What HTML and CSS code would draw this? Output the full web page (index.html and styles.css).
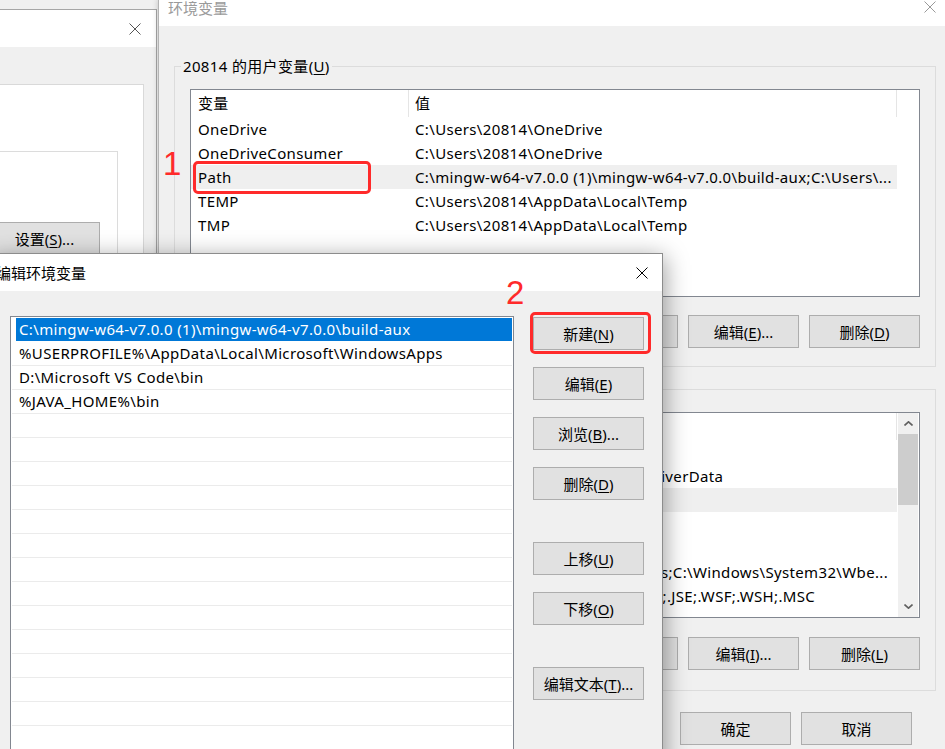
FILE: index.html
```html
<!DOCTYPE html>
<html lang="zh-CN">
<head>
  <meta charset="UTF-8" />
  <title>环境变量</title>
  <link rel="stylesheet" href="styles.css">
</head>
<body>

  <!-- 系统属性 (behind) -->
  <section class="win win-sys">
    <div class="titlebar">
      <span class="title"></span>
      <svg class="close" viewBox="0 0 12 12"><path d="M0.5 0.5L11.5 11.5M11.5 0.5L0.5 11.5" /></svg>
    </div>
    <div class="sys-body">
      <div class="sys-page">
        <div class="sys-group">
          <button class="btn">设置(<u>S</u>)...</button>
        </div>
      </div>
    </div>
  </section>

  <!-- 环境变量 -->
  <section class="win win-env">
    <div class="titlebar">
      <span class="title">环境变量</span>
      <svg class="close" viewBox="0 0 12 12"><path d="M0.5 0.5L11.5 11.5M11.5 0.5L0.5 11.5" /></svg>
    </div>
    <div class="env-body">
      <fieldset class="group">
        <legend>20814 的用户变量(<u>U</u>)</legend>
        <div class="listview lv-user">
          <div class="lv-main">
            <div class="lv-head"><span>变量</span><span>值</span></div>
            <div class="lv-row"><span>OneDrive</span><span>C:\Users\20814\OneDrive</span></div>
            <div class="lv-row"><span>OneDriveConsumer</span><span>C:\Users\20814\OneDrive</span></div>
            <div class="lv-row sel"><span>Path</span><span>C:\mingw-w64-v7.0.0 (1)\mingw-w64-v7.0.0\build-aux;C:\Users\...</span></div>
            <div class="lv-row"><span>TEMP</span><span>C:\Users\20814\AppData\Local\Temp</span></div>
            <div class="lv-row"><span>TMP</span><span>C:\Users\20814\AppData\Local\Temp</span></div>
          </div>
        </div>
        <div class="btn-row">
          <button class="btn">新建(<u>N</u>)...</button>
          <button class="btn">编辑(<u>E</u>)...</button>
          <button class="btn">删除(<u>D</u>)</button>
        </div>
      </fieldset>

      <fieldset class="group group-sys">
        <legend>系统变量(<u>S</u>)</legend>
        <div class="listview lv-sys">
          <div class="lv-main">
            <div class="lv-head"><span>变量</span><span>值</span></div>
            <div class="lv-row"><span>ComSpec</span><span>C:\Windows\system32\cmd.exe</span></div>
            <div class="lv-row"><span>DriverData</span><span>C:\Windows\System32\Drivers\DriverData</span></div>
            <div class="lv-row sel"><span>JAVA_HOME</span><span>D:\jdk1.8</span></div>
            <div class="lv-row"><span>NUMBER_OF_PROCESSORS</span><span>8</span></div>
            <div class="lv-row"><span>OS</span><span>Windows_NT</span></div>
            <div class="lv-row"><span>Path</span><span>C:\Windows\system32;C:\Windows;C:\Windows\System32\Wbe...</span></div>
            <div class="lv-row"><span>PATHEXT</span><span>.COM;.EXE;.BAT;.CMD;.VBS;.VBE;.JS;.JSE;.WSF;.WSH;.MSC</span></div>
          </div>
          <div class="scrollbar">
            <div class="sb-arrow"><svg viewBox="0 0 9 5"><path d="M0.5 4.5L4.5 0.8L8.5 4.5" /></svg></div>
            <div class="sb-thumb"></div>
            <div class="sb-track"></div>
            <div class="sb-arrow"><svg viewBox="0 0 9 5"><path d="M0.5 0.5L4.5 4.2L8.5 0.5" /></svg></div>
          </div>
        </div>
        <div class="btn-row">
          <button class="btn">新建(<u>W</u>)...</button>
          <button class="btn">编辑(<u>I</u>)...</button>
          <button class="btn">删除(<u>L</u>)</button>
        </div>
      </fieldset>

      <div class="btn-row dialog-btns">
        <button class="btn">确定</button>
        <button class="btn">取消</button>
      </div>
    </div>
  </section>

  <div class="mark mark-1">1</div>
  <div class="redbox box-path"></div>

  <!-- 编辑环境变量 (active) -->
  <section class="win win-edit">
    <div class="titlebar">
      <span class="title">编辑环境变量</span>
      <svg class="close" viewBox="0 0 12 12"><path d="M0.5 0.5L11.5 11.5M11.5 0.5L0.5 11.5" /></svg>
    </div>
    <div class="edit-body">
      <div class="path-list">
        <div class="path-row sel">C:\mingw-w64-v7.0.0 (1)\mingw-w64-v7.0.0\build-aux</div>
        <div class="path-row">%USERPROFILE%\AppData\Local\Microsoft\WindowsApps</div>
        <div class="path-row">D:\Microsoft VS Code\bin</div>
        <div class="path-row">%JAVA_HOME%\bin</div>
        <div class="path-row"></div>
        <div class="path-row"></div>
        <div class="path-row"></div>
        <div class="path-row"></div>
        <div class="path-row"></div>
        <div class="path-row"></div>
        <div class="path-row"></div>
        <div class="path-row"></div>
        <div class="path-row"></div>
        <div class="path-row"></div>
        <div class="path-row"></div>
        <div class="path-row"></div>
        <div class="path-row"></div>
        <div class="path-row"></div>
      </div>
      <div class="side-btns">
        <button class="btn">新建(<u>N</u>)</button>
        <button class="btn">编辑(<u>E</u>)</button>
        <button class="btn">浏览(<u>B</u>)...</button>
        <button class="btn">删除(<u>D</u>)</button>
        <button class="btn gap-before">上移(<u>U</u>)</button>
        <button class="btn">下移(<u>O</u>)</button>
        <button class="btn gap-before">编辑文本(<u>T</u>)...</button>
      </div>
    </div>
  </section>

  <div class="mark mark-2">2</div>
  <div class="redbox box-new"></div>

</body>
</html>
```

FILE: styles.css
```css
* {
  box-sizing: border-box;
}

body {
  margin: 0;
  width: 945px;
  height: 749px;
  overflow: hidden;
  position: relative;
  background: #f0f0f0;
  font-family: "Noto Sans", "Noto Sans CJK SC", sans-serif;
  font-size: 15px;
  letter-spacing: 0.35px;
  color: #000;
}

u {
  text-decoration-thickness: 1px;
  text-underline-offset: 2px;
}

/* windows */
.win {
  position: absolute;
  background: #f0f0f0;
  display: flex;
  flex-direction: column;
}

.titlebar {
  background: #fff;
  display: flex;
  justify-content: space-between;
  align-items: center;
  flex: none;
}

.close {
  width: 12px;
  height: 12px;
  fill: none;
  stroke: #000;
  stroke-width: 1;
}

.btn {
  width: 111px;
  height: 33px;
  background: #e1e1e1;
  border: 1px solid #adadad;
  font: inherit;
  letter-spacing: 0;
  color: #000;
  padding: 0;
  display: flex;
  align-items: center;
  justify-content: center;
  flex: none;
}

/* system properties window */
.win-sys {
  left: -300px;
  top: 9px;
  width: 457px;
  height: 760px;
  border: 1px solid #a6a6a6;
}

.win-sys .titlebar {
  height: 37px;
  padding-right: 15px;
}

.win-sys .close {
  stroke: #555;
}

.sys-body {
  flex: 1;
  display: flex;
  padding: 37px 12px 0 0;
}

.sys-page {
  flex: 1;
  background: #fff;
  border: 1px solid #d9d9d9;
  padding: 66px 25px 0 0;
}

.sys-group {
  height: 300px;
  border: 1px solid #dcdcdc;
  padding: 70px 17px 0 0;
  display: flex;
  justify-content: flex-end;
  align-items: flex-start;
}

/* environment variables window */
.win-env {
  left: 158px;
  top: -1px;
  width: 794px;
  height: 775px;
  border: 1px solid #b4b4b4;
  box-shadow: 0 0 6px rgba(0, 0, 0, 0.2);
}

.win-env .titlebar {
  height: 26px;
  align-items: flex-start;
  padding: 0 15px 0 9px;
}

.win-env .title {
  line-height: 16px;
  letter-spacing: 0;
  color: #9a9a9a;
}

.win-env .close {
  margin-top: 1px;
  stroke: #999;
}

.env-body {
  padding: 0 15px;
  display: flex;
  flex-direction: column;
}

.group {
  margin: 30px 0 0;
  padding: 13px 15px 18px;
  border: 1px solid #dcdcdc;
  min-width: 0;
}

.group-sys {
  margin-top: 12px;
  padding-bottom: 20px;
}

.group legend {
  padding: 0 2px;
  margin-left: -9px;
  line-height: 20px;
}

.listview {
  background: #fff;
  border: 1px solid #828790;
  display: flex;
  overflow: hidden;
}

.lv-user {
  height: 208px;
}

.lv-sys {
  height: 206px;
}

.lv-main {
  width: 706px;
  flex: none;
}

.lv-head,
.lv-row {
  display: grid;
  grid-template-columns: 218px 488px;
  white-space: nowrap;
}

.lv-head {
  height: 27px;
  line-height: 27px;
}

.lv-head span {
  border-right: 1px solid #e5e5e5;
  padding-left: 7px;
}

.lv-head span + span {
  padding-left: 6px;
}

.lv-row {
  height: 24px;
  line-height: 24px;
}

.lv-row span {
  padding-left: 7px;
  overflow: hidden;
}

.lv-row span + span {
  padding-left: 6px;
}

.lv-row.sel {
  background: #efefef;
}

.scrollbar {
  width: 20px;
  margin-left: 1px;
  background: #f0f0f0;
  display: flex;
  flex-direction: column;
}

.sb-arrow {
  height: 21px;
  display: flex;
  align-items: center;
  justify-content: center;
}

.sb-arrow svg {
  width: 9px;
  height: 5px;
  fill: none;
  stroke: #606060;
  stroke-width: 1.6;
}

.sb-thumb {
  height: 71px;
  background: #cdcdcd;
}

.sb-track {
  flex: 1;
}

.btn-row {
  display: flex;
  justify-content: flex-end;
  gap: 10px;
  margin-top: 18px;
}

.group-sys .btn-row {
  margin-top: 19px;
}

.dialog-btns {
  margin: 21px 24px 0 0;
}

/* annotations */
.mark {
  position: absolute;
  color: #ff2a2a;
  font-family: "Liberation Sans", sans-serif;
  font-size: 33px;
  line-height: 1;
  letter-spacing: 0;
}

.mark-1 {
  left: 163px;
  top: 147px;
}

.mark-2 {
  left: 506px;
  top: 276px;
}

.redbox {
  position: absolute;
  border: 3px solid #ff2a2a;
  border-radius: 5px;
}

.box-path {
  left: 193px;
  top: 161px;
  width: 178px;
  height: 33px;
}

.box-new {
  left: 530px;
  top: 312px;
  width: 121px;
  height: 42px;
}

/* edit environment variable dialog */
.win-edit {
  left: -12px;
  top: 253px;
  width: 675px;
  height: 520px;
  border: 1px solid #8c8c8c;
  box-shadow: 2px 4px 22px rgba(0, 0, 0, 0.38);
}

.win-edit .titlebar {
  height: 37px;
  padding: 0 14px 0 7px;
}

.win-edit .title {
  letter-spacing: 0;
}

.edit-body {
  flex: 1;
  display: flex;
  align-items: flex-start;
  gap: 19px;
  padding: 25px 0 0 21px;
}

.path-list {
  width: 504px;
  height: 470px;
  background: #fff;
  border: 1px solid #828790;
  padding-top: 1px;
  flex: none;
}

.path-row {
  height: 24px;
  line-height: 23px;
  margin: 0 1px;
  padding-left: 7px;
  border-bottom: 1px solid #ebebeb;
  white-space: nowrap;
  overflow: hidden;
}

.path-row.sel {
  margin-left: 5px;
  padding-left: 3px;
  background: #0078d7;
  color: #fff;
  border-bottom-color: #fff;
}

.side-btns {
  display: flex;
  flex-direction: column;
  gap: 17px;
  padding-top: 1px;
}

.side-btns .gap-before {
  margin-top: 25px;
}
```
